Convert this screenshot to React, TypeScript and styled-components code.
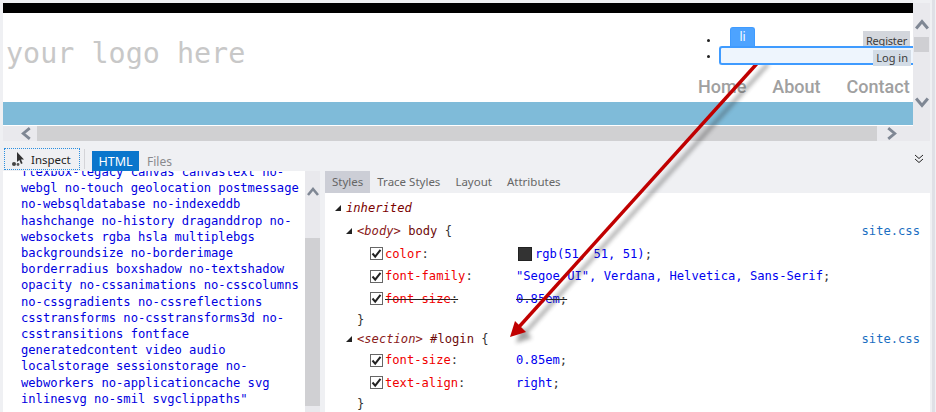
import React from 'react';
import styled, { createGlobalStyle } from 'styled-components';

const uiFont = '"Noto Sans", "Open Sans", sans-serif';
const monoFont = '"DejaVu Sans Mono", "Liberation Mono", monospace';

const GlobalStyle = createGlobalStyle`
  html, body {
    margin: 0;
    padding: 0;
    background: #eeeef2;
    overflow: hidden;
  }
`;

const Page = styled.div`
  position: relative;
  width: 936px;
  height: 412px;
  overflow: hidden;
  display: flex;
  flex-direction: column;
  background: linear-gradient(to right, #eff0f3 932px, #dfe0e6 932px, #dfe0e6 935px, #f0f0f4 935px);
  font-family: ${uiFont};
  box-sizing: border-box;
  padding: 3px 0 0 3px;
`;

const Top = styled.div`
  display: flex;
  width: 927px;
  height: 123px;
`;

const Site = styled.div`
  width: 910px;
  display: flex;
  flex-direction: column;
  background: #fff;
  overflow: hidden;
`;

const BlackBar = styled.div`
  height: 10px;
  background: #000;
`;

const SiteHeader = styled.div`
  height: 89px;
  display: flex;
  justify-content: space-between;
`;

const Logo = styled.div`
  font-family: ${monoFont};
  font-size: 28.4px;
  line-height: 34px;
  color: #c8c8c8;
  padding: 24px 0 0 3px;
`;

const HeaderRight = styled.div`
  width: 212px;
  display: flex;
  flex-direction: column;
`;

const LoginRow = styled.div<{ $height: number; $bullet: number }>`
  position: relative;
  height: ${({ $height }) => $height}px;
  display: flex;
  align-items: flex-end;
  &::before {
    content: '';
    position: absolute;
    left: 6px;
    bottom: ${({ $bullet }) => $bullet}px;
    width: 3px;
    height: 3px;
    border-radius: 50%;
    background: #222;
  }
`;

const LiTab = styled.div`
  width: 25px;
  height: 19px;
  margin-left: 29px;
  box-sizing: border-box;
  background: #4da3ff;
  border: 1px solid #3f9bff;
  border-bottom: none;
  border-radius: 3px 3px 0 0;
  color: #fff;
  font-size: 12px;
  line-height: 18px;
  text-align: center;
`;

const Register = styled.div`
  margin-left: auto;
  margin-right: 3px;
  margin-bottom: -4px;
  height: 19px;
  padding: 0 3px;
  background: #d3d6dc;
  color: #3c3c3c;
  font-size: 11px;
  letter-spacing: -0.2px;
  line-height: 20px;
`;

const LoginBox = styled.div`
  position: relative;
  z-index: 1;
  margin-left: 18px;
  width: 194px;
  height: 19px;
  box-sizing: border-box;
  border: 2px solid #3f9bff;
  border-right: none;
  border-radius: 3px 0 0 3px;
  background: #eef5fd;
  display: flex;
  justify-content: flex-end;
`;

const LogIn = styled.div`
  height: 16px;
  margin: 2px 2px 0 0;
  padding: 0 3px;
  background: #d3dce6;
  color: #3c3c3c;
  font-size: 11px;
  line-height: 15px;
`;

const Nav = styled.div`
  display: flex;
  gap: 26px;
  margin: 10px 0 0 -3px;
  white-space: nowrap;
`;

const NavLink = styled.div`
  font-family: Roboto, ${uiFont};
  font-size: 18px;
  line-height: 24px;
  font-weight: 500;
  color: #a0a0a0;
`;

const BlueBand = styled.div`
  height: 23px;
  background: #7fbbd9;
`;

const VScroll = styled.div`
  width: 17px;
  background: #e9e9ed;
  display: flex;
  flex-direction: column;
  align-items: center;
  padding-top: 15px;
  box-sizing: border-box;
`;

const VThumb = styled.div`
  width: 15px;
  height: 15px;
  margin-top: 5px;
  background: #cfcfd3;
`;

const VSpacer = styled.div`
  height: 43px;
`;

const HScroll = styled.div`
  width: 927px;
  height: 15px;
  display: flex;
  align-items: center;
  background: #e9e9ed;
  padding-left: 17px;
  box-sizing: border-box;
`;

const HThumb = styled.div`
  width: 840px;
  height: 15px;
  margin: 0 8px 0 4px;
  background: #d0d0d2;
`;

const Toolbar = styled.div`
  height: 30px;
  width: 927px;
  display: flex;
  align-items: flex-end;
  box-sizing: border-box;
`;

const InspectBtn = styled.div`
  width: 76px;
  height: 22px;
  margin: 0 0 1px 1px;
  box-sizing: border-box;
  border: 1px dotted #2b8fe0;
  display: flex;
  align-items: center;
  padding-left: 5px;
  gap: 3px;
  font-size: 11.5px;
  color: #222;
`;

const ToolDivider = styled.div`
  width: 1px;
  height: 20px;
  margin: 0 7px 2px 4px;
  background: #d4d4d8;
`;

const HtmlTab = styled.div`
  width: 47px;
  height: 20px;
  background: #0a76cc;
  color: #fff;
  font-size: 12.5px;
  line-height: 21px;
  text-align: center;
`;

const FilesTab = styled.div`
  margin-left: 8px;
  height: 20px;
  line-height: 21px;
  font-size: 12px;
  color: #8a8a8e;
`;

const CollapseIcon = styled.div`
  margin-left: auto;
  margin-right: 6px;
  height: 17px;
  display: flex;
  align-items: flex-start;
`;

const Bottom = styled.div`
  flex: 1;
  width: 927px;
  display: flex;
  min-height: 0;
`;

const SourcePane = styled.div`
  width: 302px;
  background: #fff;
  overflow: hidden;
`;

const SourceText = styled.pre`
  margin: -7px 0 0 18px;
  font-family: ${monoFont};
  font-size: 12.15px;
  line-height: 16.2px;
  color: #0000e0;
`;

const SourceScroll = styled.div`
  width: 15px;
  background: #e9e9ed;
  display: flex;
  flex-direction: column;
  align-items: center;
  padding-top: 15px;
  box-sizing: border-box;
`;

const SourceThumb = styled.div`
  width: 15px;
  height: 168px;
  margin-top: 40px;
  background: #d0d0d3;
`;

const StylesPane = styled.div`
  flex: 1;
  margin-left: 5px;
  display: flex;
  flex-direction: column;
  min-width: 0;
`;

const Tabs = styled.div`
  height: 22px;
  display: flex;
`;

const Tab = styled.div<{ $active?: boolean }>`
  height: 22px;
  padding: 0 ${({ $active }) => ($active ? 7 : 6)}px;
  margin-right: ${({ $active }) => ($active ? 1 : 3)}px;
  font-size: 11.5px;
  line-height: 22px;
  color: #666;
  background: ${({ $active }) => ($active ? '#ccced6' : 'transparent')};
`;

const RulesBody = styled.div`
  flex: 1;
  background: #fff;
  overflow: hidden;
  padding-top: 4px;
  font-family: ${monoFont};
  font-size: 12.15px;
  color: #333;
`;

const Row = styled.div<{ $indent: number; $height: number }>`
  display: flex;
  align-items: center;
  height: ${({ $height }) => $height}px;
  padding-left: ${({ $indent }) => $indent}px;
  padding-right: 10px;
  white-space: pre;
`;

const Triangle = styled.span`
  width: 0;
  height: 0;
  margin-right: 5px;
  border-style: solid;
  border-width: 0 0 6px 6px;
  border-color: transparent transparent #222 transparent;
`;

const Inherited = styled.span`
  font-style: italic;
  color: #7a0000;
`;

const Selector = styled.span`
  color: #333;
  & > b {
    font-weight: normal;
    color: #6e0a0a;
  }
  & em {
    color: #8a2020;
  }
`;

const Box = styled.span`
  width: 13px;
  height: 13px;
  margin-right: 2px;
  flex: none;
  position: relative;
  box-sizing: border-box;
  border: 1px solid #666;
  background: #fff;
`;

const PropName = styled.span<{ $off?: boolean }>`
  width: 131px;
  flex: none;
  color: #333;
  & b {
    font-weight: normal;
    color: #f00000;
  }
  & > span {
    text-decoration: ${({ $off }) => ($off ? 'line-through' : 'none')};
    text-decoration-color: #222;
  }
`;

const PropValue = styled.span<{ $off?: boolean }>`
  color: #0000f0;
  text-decoration: ${({ $off }) => ($off ? 'line-through' : 'none')};
  text-decoration-color: #222;
  & > i {
    font-style: normal;
    color: #333;
  }
`;

const Swatch = styled.span`
  width: 14px;
  height: 14px;
  margin: 0 3px 0 2px;
  background: #333;
  border: 1px solid #222;
  box-sizing: border-box;
  flex: none;
`;

const FileLink = styled.span`
  margin-left: auto;
  color: #1b6ec2;
`;

const ArrowOverlay = styled.svg`
  position: absolute;
  left: 0;
  top: 0;
  pointer-events: none;
`;

const Chevron = ({ dir, color = '#7f8794', size = 12 }: { dir: 'up' | 'down' | 'left' | 'right'; color?: string; size?: number }) => {
  const points = {
    up: '1,9 6,3 11,9',
    down: '1,3 6,9 11,3',
    left: '9,1 3,6 9,11',
    right: '3,1 9,6 3,11',
  }[dir];
  return (
    <svg width={size} height={size} viewBox="0 0 12 12" style={{ flex: 'none' }}>
      <polyline points={points} fill="none" stroke={color} strokeWidth="2.6" />
    </svg>
  );
};

const Check = () => (
  <svg width="11" height="11" viewBox="0 0 11 11" style={{ position: 'absolute', left: 0, top: 0 }}>
    <polyline points="1.5,5.5 4.2,8.6 9.5,1.8" fill="none" stroke="#222" strokeWidth="2" />
  </svg>
);

const sourceText = `flexbox-legacy canvas canvastext no-
webgl no-touch geolocation postmessage
no-websqldatabase no-indexeddb
hashchange no-history draganddrop no-
websockets rgba hsla multiplebgs
backgroundsize no-borderimage
borderradius boxshadow no-textshadow
opacity no-cssanimations no-csscolumns
no-cssgradients no-cssreflections
csstransforms no-csstransforms3d no-
csstransitions fontface
generatedcontent video audio
localstorage sessionstorage no-
webworkers no-applicationcache svg
inlinesvg no-smil svgclippaths"`;

function PropRow({ name, off, children }: { name: string; off?: boolean; children: React.ReactNode }) {
  return (
    <Row $indent={45} $height={22.5}>
      <Box>
        <Check />
      </Box>
      <PropName $off={off}>
        <span>
          <b>{name}</b>:
        </span>
      </PropName>
      {children}
    </Row>
  );
}

export default function App() {
  return (
    <Page>
      <GlobalStyle />
      <Top>
        <Site>
          <BlackBar />
          <SiteHeader>
            <Logo>your logo here</Logo>
            <HeaderRight>
              <LoginRow $height={33} $bullet={4}>
                <LiTab>li</LiTab>
                <Register>Register</Register>
              </LoginRow>
              <LoginRow $height={19} $bullet={7}>
                <LoginBox>
                  <LogIn>Log in</LogIn>
                </LoginBox>
              </LoginRow>
              <Nav>
                <NavLink>Home</NavLink>
                <NavLink>About</NavLink>
                <NavLink>Contact</NavLink>
              </Nav>
            </HeaderRight>
          </SiteHeader>
          <BlueBand />
        </Site>
        <VScroll>
          <Chevron dir="up" size={14} />
          <VThumb />
          <VSpacer />
          <Chevron dir="down" size={14} />
        </VScroll>
      </Top>
      <HScroll>
        <Chevron dir="left" size={13} />
        <HThumb />
        <Chevron dir="right" size={13} />
      </HScroll>
      <Toolbar>
        <InspectBtn>
          <svg width="18" height="16" viewBox="0 0 18 16">
            <path d="M7 1 L7 11 L9.4 9 L11 13 L12.6 12.3 L11 8.6 L14 8.4 Z" fill="#333" />
            <circle cx="4" cy="13" r="2" fill="#444" />
            <circle cx="8" cy="13.5" r="1.4" fill="#555" />
          </svg>
          Inspect
        </InspectBtn>
        <ToolDivider />
        <HtmlTab>HTML</HtmlTab>
        <FilesTab>Files</FilesTab>
        <CollapseIcon>
          <svg width="10" height="10" viewBox="0 0 10 10">
            <polyline points="1,1 5,4.5 9,1" fill="none" stroke="#222" strokeWidth="1" />
            <polyline points="1,5 5,8.5 9,5" fill="none" stroke="#222" strokeWidth="1" />
          </svg>
        </CollapseIcon>
      </Toolbar>
      <Bottom>
        <SourcePane>
          <SourceText>{sourceText}</SourceText>
        </SourcePane>
        <SourceScroll>
          <Chevron dir="up" />
          <SourceThumb />
        </SourceScroll>
        <StylesPane>
          <Tabs>
            <Tab $active>Styles</Tab>
            <Tab>Trace Styles</Tab>
            <Tab>Layout</Tab>
            <Tab>Attributes</Tab>
          </Tabs>
          <RulesBody>
            <Row $indent={10} $height={22.5}>
              <Triangle />
              <Inherited>inherited</Inherited>
            </Row>
            <Row $indent={21} $height={23}>
              <Triangle />
              <Selector>
                <b>
                  <em>&lt;body&gt;</em> body
                </b>{' '}
                {'{'}
              </Selector>
              <FileLink>site.css</FileLink>
            </Row>
            <PropRow name="color">
              <Swatch />
              <PropValue>
                rgb(51, 51, 51)<i>;</i>
              </PropValue>
            </PropRow>
            <PropRow name="font-family">
              <PropValue>
                "Segoe UI", Verdana, Helvetica, Sans-Serif<i>;</i>
              </PropValue>
            </PropRow>
            <PropRow name="font-size" off>
              <PropValue $off>
                0.85em<i>;</i>
              </PropValue>
            </PropRow>
            <Row $indent={32} $height={19}>
              {'}'}
            </Row>
            <Row $indent={21} $height={20}>
              <Triangle />
              <Selector>
                <b>
                  <em>&lt;section&gt;</em> #login
                </b>{' '}
                {'{'}
              </Selector>
              <FileLink>site.css</FileLink>
            </Row>
            <PropRow name="font-size">
              <PropValue>
                0.85em<i>;</i>
              </PropValue>
            </PropRow>
            <PropRow name="text-align">
              <PropValue>
                right<i>;</i>
              </PropValue>
            </PropRow>
            <Row $indent={32} $height={20}>
              {'}'}
            </Row>
          </RulesBody>
        </StylesPane>
      </Bottom>
      <ArrowOverlay width="936" height="412" viewBox="0 0 936 412">
        <g opacity="0.45" transform="translate(6,6)" style={{ filter: 'blur(2px)' }}>
          <line x1="762" y1="58" x2="518" y2="328" stroke="#333" strokeWidth="3.4" />
          <polygon points="510,337 526,332 515,321" fill="#333" />
        </g>
        <line x1="762" y1="58" x2="518" y2="328" stroke="#c00000" strokeWidth="3.4" />
        <polygon points="510,337 526,332 515,321" fill="#c00000" />
      </ArrowOverlay>
    </Page>
  );
}
